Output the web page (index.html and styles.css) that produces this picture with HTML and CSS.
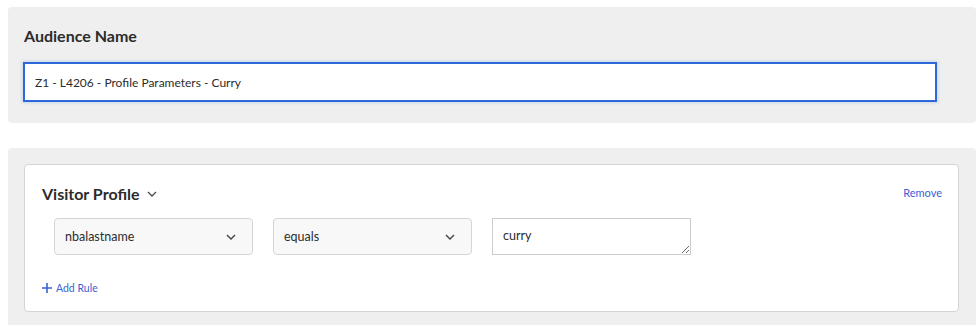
FILE: index.html
```html
<!DOCTYPE html>
<html lang="en">
<head>
    <meta charset="UTF-8">
    <title>Audience</title>
    <link rel="stylesheet" href="styles.css">
</head>
<body>
    <!-- Audience name -->
    <div class="panel name-panel">
        <h2 class="panel-title">Audience Name</h2>
        <input type="text" class="name-input" value="Z1 - L4206 - Profile Parameters - Curry">
    </div>

    <!-- Rules -->
    <div class="panel rules-panel">
        <div class="rule-card">
            <div class="card-head">
                <h3 class="card-title">Visitor Profile
                    <svg class="chev" width="10" height="6" viewBox="0 0 10 6"><path d="M1 1l4 4 4-4" fill="none" stroke="#4b4b4b" stroke-width="1.3"/></svg>
                </h3>
                <a class="link remove" href="#">Remove</a>
            </div>
            <div class="rule-row">
                <div class="select">
                    <span>nbalastname</span>
                    <svg width="10" height="6" viewBox="0 0 10 6"><path d="M1 1l4 4 4-4" fill="none" stroke="#4b4b4b" stroke-width="1.5"/></svg>
                </div>
                <div class="select">
                    <span>equals</span>
                    <svg width="10" height="6" viewBox="0 0 10 6"><path d="M1 1l4 4 4-4" fill="none" stroke="#4b4b4b" stroke-width="1.5"/></svg>
                </div>
                <textarea class="value-box">curry</textarea>
            </div>
            <a class="link add-rule" href="#">
                <svg width="10" height="10" viewBox="0 0 10 10"><path d="M5 0v10M0 5h10" stroke="#3a5fd6" stroke-width="1.6"/></svg>
                Add Rule
            </a>
        </div>
    </div>
</body>
</html>
```

FILE: styles.css
```css
body {
    margin: 0;
    padding: 7px 4px 0 8px;
    font-family: Lato, "Open Sans", sans-serif;
    color: #2c2c2c;
    background: #fff;
}
.panel {
    background-color: #efefef;
    border-radius: 4px;
    padding: 16px;
}
.name-panel {
    height: 116px;
    box-sizing: border-box;
    padding-top: 20px;
}
.panel-title {
    margin: 0 0 18px;
    font-size: 16px;
    font-weight: bold;
    line-height: 18px;
}
.name-input {
    display: block;
    width: 912px;
    height: 38px;
    box-sizing: border-box;
    padding: 0 10px;
    font-family: inherit;
    font-size: 12px;
    color: #2c2c2c;
    border: 1px solid #2d68d8;
    border-radius: 0;
    box-shadow: 0 0 0 1px #2d68d8, 0 0 3px 2px rgba(45, 104, 216, 0.2);
    outline: none;
}
.rules-panel {
    margin-top: 25px;
    padding-right: 17px;
}
.rule-card {
    background: #fff;
    border: 1px solid #d5d5d5;
    border-radius: 4px;
    padding: 18px 16px 15px 17px;
}
.card-head {
    display: flex;
    justify-content: space-between;
    align-items: center;
}
.card-title {
    margin: 0;
    font-size: 16px;
    font-weight: bold;
    line-height: 22px;
    display: flex;
    align-items: center;
    gap: 7px;
}
.link {
    color: #3a5fd6;
    text-decoration: none;
    font-size: 11px;
}
.remove {
    margin-top: -3px;
}
.rule-row {
    display: flex;
    gap: 20px;
    margin: 13px 0 0 12px;
}
.select, .value-box {
    width: 199px;
    height: 37px;
    box-sizing: border-box;
}
.select {
    display: flex;
    align-items: center;
    justify-content: space-between;
    padding: 0 16px 0 10px;
    background: #f8f8f8;
    border: 1px solid #d5d5d5;
    border-radius: 4px;
    font-size: 12.5px;
}
.value-box {
    border: 1px solid #cccccc;
    padding: 9px 10px;
    font-family: inherit;
    font-size: 12.5px;
    color: #2c2c2c;
    resize: vertical;
}
.add-rule {
    display: inline-flex;
    align-items: center;
    gap: 4px;
    margin-top: 27px;
    font-size: 10.5px;
}
```
